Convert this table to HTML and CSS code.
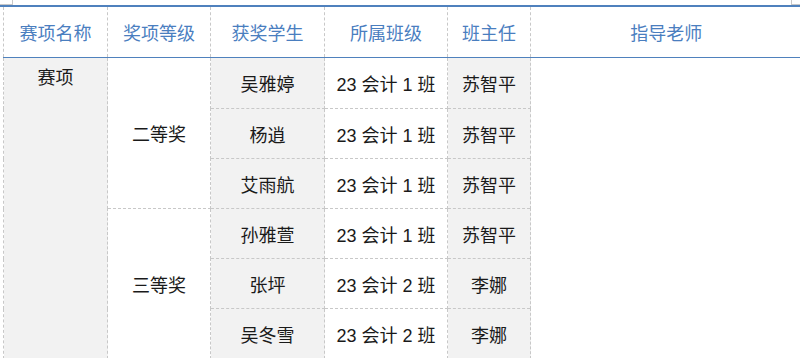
FILE: index.html
```html
<!DOCTYPE html>
<html lang="zh">
<head>
<meta charset="utf-8">
<link rel="stylesheet" href="styles.css">
</head>
<body>
<div class="topstrip">
  <div class="corner-left"></div>
  <div class="corner-right"></div>
</div>
<div class="bluebar"></div>
<table class="awards">
  <colgroup>
    <col class="c1"><col class="c2"><col class="c3"><col class="c4"><col class="c5"><col class="c6">
  </colgroup>
  <thead>
    <tr>
      <th>赛项名称</th><th>奖项等级</th><th>获奖学生</th><th>所属班级</th><th>班主任</th><th>指导老师</th>
    </tr>
  </thead>
  <tbody>
    <tr class="first">
      <td class="g event" rowspan="6">赛项</td>
      <td class="level" rowspan="3">二等奖</td>
      <td class="g">吴雅婷</td><td>23 会计 1 班</td><td class="g">苏智平</td><td class="teacher" rowspan="6"></td>
    </tr>
    <tr><td class="g">杨逍</td><td>23 会计 1 班</td><td class="g">苏智平</td></tr>
    <tr><td class="g">艾雨航</td><td>23 会计 1 班</td><td class="g">苏智平</td></tr>
    <tr>
      <td class="level" rowspan="3">三等奖</td>
      <td class="g">孙雅萱</td><td>23 会计 1 班</td><td class="g">苏智平</td>
    </tr>
    <tr><td class="g">张坪</td><td>23 会计 2 班</td><td class="g">李娜</td></tr>
    <tr><td class="g">吴冬雪</td><td>23 会计 2 班</td><td class="g">李娜</td></tr>
  </tbody>
</table>
</body>
</html>
```

FILE: styles.css
```css
html, body {
  margin: 0;
  padding: 0;
  background: #ffffff;
  overflow: hidden;
}
body {
  font-family: "Liberation Sans", "Noto Sans CJK SC", sans-serif;
  font-size: 18px;
  color: #1a1a1a;
  width: 800px;
  height: 358px;
}
.topstrip {
  height: 5px;
  display: flex;
  justify-content: space-between;
}
.corner-left {
  width: 12px;
  height: 4px;
  border-right: 1px solid #c8c8c8;
  border-bottom: 1px solid #c8c8c8;
}
.corner-right {
  width: 8px;
  height: 4px;
  border-left: 1px solid #c8c8c8;
  border-bottom: 1px solid #c8c8c8;
}
.bluebar {
  height: 2px;
  background: #4f81bd;
}
.awards {
  margin-left: 3px;
  border-collapse: collapse;
  table-layout: fixed;
  width: 798px;
}
.c1 { width: 104px; }
.c2 { width: 103px; }
.c3 { width: 114px; }
.c4 { width: 123px; }
.c5 { width: 83px; }
.c6 { width: 271px; }
.awards th {
  height: 50px;
  padding: 0;
  font-weight: normal;
  color: #4a7ebf;
  text-align: center;
  vertical-align: middle;
  border-left: 1px dashed #c8c8c8;
  border-bottom: 1px solid #4f81bd;
}
.awards td {
  height: 49px;
  padding: 0;
  text-align: center;
  vertical-align: middle;
  border: 1px dashed #c8c8c8;
  border-top: none;
}
.awards tr.first td {
  height: 50px;
}
.awards td.g {
  background: #f2f2f2;
}
.awards td.event {
  vertical-align: top;
  padding-top: 5px;
}
.awards td.teacher {
  border-right: none;
}
```
